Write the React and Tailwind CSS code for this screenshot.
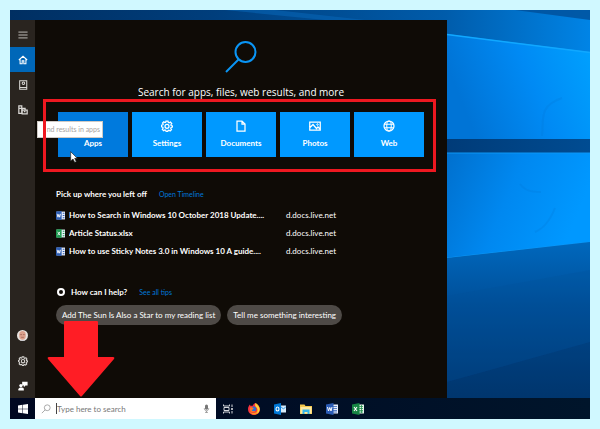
function Icon({ className = 'size-3', children }) {
  return (
    <svg viewBox="0 0 24 24" className={className} fill="none" stroke="currentColor" strokeWidth="2" aria-hidden="true">
      {children}
    </svg>
  )
}

function Gear({ className }) {
  return (
    <Icon className={className}>
      <path strokeWidth="2.500" d="M10 2h4l.7 3 1.600.7L19 4l2.500 3-1.700 2.500.4 1.600 2.800.7v2.400l-2.800.8-.7 1.600 1.500 2.600-2.700 2.600-2.600-1.500-1.700.7L13.500 23h-3.200l-.8-2.500-1.600-.7-2.600 1.500-2.600-2.600 1.500-2.600-.7-1.700-2.600-.8v-3.200l2.800-.8.7-1.600L3 6l2.500-2.500L8 5l1.400-.6z" />
      <circle cx="12" cy="12.500" r="4" strokeWidth="2.500" />
    </Icon>
  )
}

const TILES = [
  { name: 'Apps', icon: null },
  { name: 'Settings', icon: <Gear className="size-3" /> },
  {
    name: 'Documents',
    icon: (
      <Icon>
        <path strokeWidth="2.500" d="M4 2h10l6 6v14H4z M14 2v6h6" />
      </Icon>
    ),
  },
  {
    name: 'Photos',
    icon: (
      <Icon>
        <path strokeWidth="2.500" d="M1.500 4h21v16h-21z M2 15l6-6 7 8 3-3 4 4" />
        <circle cx="17" cy="9" r="1.500" />
      </Icon>
    ),
  },
  {
    name: 'Web',
    icon: (
      <Icon>
        <circle cx="12" cy="12" r="10" strokeWidth="2.500" />
        <ellipse cx="12" cy="12" rx="4.500" ry="10" />
        <path d="M3 8.500h18M3 15.500h18" />
      </Icon>
    ),
  },
]

const WORD = { color: '#2f5fb3', mark: 'M2 5l1.500 6L5 6l1.500 5L8 5' }
const EXCEL = { color: '#1f9a50', mark: 'M3 5l4 6M7 5l-4 6' }

const FILES = [
  { name: 'How to Search in Windows 10 October 2018 Update....', host: 'd.docs.live.net', type: WORD },
  { name: 'Article Status.xlsx', host: 'd.docs.live.net', type: EXCEL },
  { name: 'How to use Sticky Notes 3.0 in Windows 10 A guide....', host: 'd.docs.live.net', type: WORD },
]

const TIPS = ['Add The Sun Is Also a Star to my reading list', 'Tell me something interesting']

function Wallpaper() {
  return (
    <svg
      viewBox="0 0 580 409"
      preserveAspectRatio="none"
      className="absolute inset-0 size-full"
      aria-hidden="true"
    >
      <defs>
        <linearGradient id="sky" x1="0" x2="1" y1="0" y2="0">
          <stop offset="0" stopColor="#002f62" />
          <stop offset="0.35" stopColor="#003e7c" />
          <stop offset="0.75" stopColor="#005cab" />
          <stop offset="1" stopColor="#0084e6" />
        </linearGradient>
        <linearGradient id="pane" x1="0" x2="1" y1="0.3" y2="0">
          <stop offset="0" stopColor="#0074d6" />
          <stop offset="0.5" stopColor="#008af4" />
          <stop offset="1" stopColor="#00a2ff" />
        </linearGradient>
        <linearGradient id="paneLow" x1="0" x2="1" y1="0" y2="0.3">
          <stop offset="0" stopColor="#0070ce" />
          <stop offset="0.5" stopColor="#0088f0" />
          <stop offset="1" stopColor="#0098ff" />
        </linearGradient>
        <linearGradient id="floor" x1="0" x2="0" y1="0" y2="1">
          <stop offset="0" stopColor="#0068bd" />
          <stop offset="0.35" stopColor="#004f99" />
          <stop offset="0.8" stopColor="#003a76" />
          <stop offset="1" stopColor="#003469" />
        </linearGradient>
        <linearGradient id="bar" x1="0" x2="1" y1="0" y2="0">
          <stop offset="0" stopColor="#003b78" />
          <stop offset="1" stopColor="#004c92" />
        </linearGradient>
      </defs>
      <path fill="url(#sky)" d="M0 0h580v409H0z" />
      <path fill="#0764b4" opacity="0.6" d="M215 0h50l90 10h-40z" />
      <path fill="#004f99" opacity="0.8" d="M505 0h75v10z" />
      <path fill="url(#pane)" d="M437 24l143 18v88H437z" />
      <path stroke="#10a8ff" strokeWidth="1.500" d="M437 24.500l143 18" />
      <path fill="url(#bar)" d="M437 129h143v14H437z" />
      <path fill="url(#paneLow)" d="M437 143h143v89l-143 16z" />
      <path stroke="#0c97f5" d="M437 143h143M437 248l143-16" />
      <path fill="url(#floor)" d="M437 248l143-16v177H437z" />
      <path fill="#003166" opacity="0.2" d="M437 372l143-40v77H437z" />
      <path fill="#004f97" opacity="0.2" d="M437 286l143-26v72l-143 40z" />
      <path fill="none" stroke="#0079d8" strokeWidth="2" opacity="0.25" d="M532 126c2-16-4-30 20-38M510 174c5 7 12 8 21 8M525 222c10-4 16-14 20-24" />
    </svg>
  )
}

function Sidebar() {
  return (
    <nav className="flex w-[25px] shrink-0 flex-col bg-[#29241f] pt-[2px] text-[#d8d6d3]">
      <button aria-label="Menu" className="flex h-[25px] items-center justify-center">
        <Icon className="size-[10px]">
          <path d="M1 5h22M1 12h22M1 19h22" strokeWidth="2" />
        </Icon>
      </button>
      <button aria-label="Home" className="flex h-[25px] items-center justify-center bg-[#0067b8] text-white">
        <Icon className="size-[10px]">
          <path d="M2 12L12 3l10 9M5 10v11h5v-7h4v7h5V10" strokeWidth="2.500" />
        </Icon>
      </button>
      <button aria-label="Notebook" className="flex h-[25px] items-center justify-center">
        <Icon className="size-[10px]">
          <path d="M4 2h17v16H4zM4 18v4h17v-4" strokeWidth="2.500" />
          <circle cx="13" cy="8" r="3" strokeWidth="2.500" />
        </Icon>
      </button>
      <button aria-label="Devices" className="flex h-[25px] items-center justify-center">
        <Icon className="size-[10px]">
          <path d="M2 20V2h7v18zM2 8h7M10 11V8h7v3M10 12h12v9H10zM14 16h4" strokeWidth="3" />
        </Icon>
      </button>
      <button aria-label="Account" className="mt-auto flex h-[25px] items-center justify-center">
        <svg viewBox="0 0 24 24" className="size-[11px]" aria-hidden="true">
          <circle cx="12" cy="12" r="12" fill="#e8e3df" />
          <path fill="#dba08c" d="M5 9c0-9 14-9 14 0v6c-1 8-13 8-14 0z" />
          <path stroke="#9a5f52" strokeWidth="1.500" d="M7 10h4M13 10h4M9 16h6" />
          <path fill="#c5c8cf" d="M5 20c4 3 10 3 14 0-3 5-11 5-14 0z" />
        </svg>
      </button>
      <button aria-label="Settings" className="flex h-[25px] items-center justify-center">
        <Gear className="size-[10px]" />
      </button>
      <button aria-label="Feedback" className="flex h-[25px] items-center justify-center text-white">
        <svg viewBox="0 0 24 24" className="size-[10px]" fill="currentColor" aria-hidden="true">
          <path d="M10 2h13v9h-5l-4 4v-4h-4z" />
          <circle cx="7" cy="11" r="4" />
          <path d="M1 23v-3c0-6 13-6 13-1v4z" />
        </svg>
      </button>
    </nav>
  )
}

function SearchTiles() {
  return (
    <div className="relative mr-[11px] ml-2 border-3 border-[#ee1820] pt-[10px] pr-[9px] pb-3 pl-3">
      <div className="grid grid-cols-5 gap-1">
        {TILES.map((tile, i) => (
          <button
            key={tile.name}
            className={`flex h-[45px] flex-col items-center pt-2 text-[8px] leading-3 font-bold text-white ${
              i === 0 ? 'bg-[#007add]' : 'bg-[#0099ff]'
            }`}
          >
            <span className="mb-[5px] flex h-3 items-center">{tile.icon}</span>
            {tile.name}
          </button>
        ))}
      </div>
      {/* hover tooltip and pointer */}
      <div className="absolute top-[19px] -left-[9px] flex h-[17px] w-[66px] items-center justify-end border border-[#cfcac5] bg-white pr-[2px] text-[7px] leading-none whitespace-nowrap text-[#a8a49f]">
        nd results in apps
        <span className="absolute -inset-y-px left-[5px] w-[3px] bg-[#ee1820]" />
      </div>
      <svg viewBox="0 0 12 18" className="absolute top-[49px] left-[24px] h-3 w-2" aria-hidden="true">
        <path fill="#fff" stroke="#222" d="M1 1v14l3.500-3 2.500 5 2.500-1-2.500-5H11z" />
      </svg>
    </div>
  )
}

function SearchPanel() {
  return (
    <main className="flex min-w-0 flex-1 flex-col bg-[#0f0b06] text-white">
      <svg viewBox="0 0 32 32" className="mx-auto mt-[21px] size-8 shrink-0" fill="none" stroke="#0a95f5" strokeWidth="2" aria-hidden="true">
        <circle cx="20.500" cy="11" r="10" />
        <path d="M13.500 18.500L1 31" />
      </svg>
      <h1 className="mt-3 text-center font-['Open_Sans','Noto_Sans',sans-serif] text-[10px] leading-[14px] font-medium">
        Search for apps, files, web results, and more
      </h1>
      <SearchTiles />

      <section className="mt-[14px] px-[21px]">
        <div className="flex items-center gap-3 leading-4">
          <h2 className="text-[8px] font-bold">Pick up where you left off</h2>
          <a href="#timeline" className="text-[7px] text-[#0078d7]">Open Timeline</a>
        </div>
        <ul className="mt-1">
          {FILES.map((file) => (
            <li key={file.name} className="flex h-[18px] items-center text-[8px]">
              <svg viewBox="0 0 16 16" className="mr-1 size-[9px] shrink-0" aria-hidden="true">
                <path fill="#e9eefa" d="M1 1h15v14H1z" />
                <path fill={file.type.color} d="M0 1l10-1v16L0 15zM12 3h3v2h-3zM12 7h3v2h-3zM12 11h3v2h-3z" />
                <path fill="none" stroke="#fff" strokeWidth="1.500" d={file.type.mark} />
              </svg>
              <span className="w-[217px] truncate font-bold">{file.name}</span>
              <span>{file.host}</span>
            </li>
          ))}
        </ul>
      </section>

      <section className="mt-6 px-[21px]">
        <div className="flex items-center gap-3 leading-4">
          <h2 className="flex items-center gap-[6px] text-[8px] font-bold">
            <span className="ml-px size-2 rounded-full border-2 border-white" />
            How can I help?
          </h2>
          <a href="#tips" className="text-[7px] text-[#0078d7]">See all tips</a>
        </div>
        <div className="mt-[5px] flex flex-wrap gap-[6px]">
          {TIPS.map((tip) => (
            <button key={tip} className="h-5 rounded-full bg-[#4e4a46] px-[6px] text-[8px] leading-5 whitespace-nowrap">
              {tip}
            </button>
          ))}
        </div>
      </section>
    </main>
  )
}

function Taskbar() {
  return (
    <footer className="relative flex h-[21px] shrink-0 bg-linear-to-r from-[#000720] to-[#00152b]">
      <button aria-label="Start" className="flex w-[25px] items-center justify-center">
        <svg viewBox="0 0 20 20" className="size-[10px]" fill="#fff" aria-hidden="true">
          <path d="M0 3l9-1.300V9.500H0zM10 1.500L20 0v9.500H10zM0 10.500h9v7.800L0 17zM10 10.500h10V20l-10-1.500z" />
        </svg>
      </button>
      <label className="flex w-[181px] items-center bg-white px-[6px] text-[#9a9a9a]">
        <Icon className="mr-[5px] size-[10px] shrink-0">
          <circle cx="15" cy="9" r="7" />
          <path d="M10 14l-8 8" />
        </Icon>
        <input
          aria-label="Search"
          placeholder="Type here to search"
          className="h-[11px] min-w-0 flex-1 border-l border-[#444] text-[8px] outline-none placeholder:text-[#777]"
        />
        <svg viewBox="0 0 16 24" className="h-[9px] w-[7px]" aria-hidden="true">
          <rect x="4" y="1" width="8" height="14" rx="4" fill="#777" />
          <path fill="none" stroke="#888" strokeWidth="2" d="M2 11c0 10 12 10 12 0M8 18v5M4 23h8" />
        </svg>
      </label>
      <div className="flex items-center gap-[14px] pl-[6px]">
        <button aria-label="Task View">
          <Icon className="size-3 text-[#d5d8dd]">
            <path d="M3 3v3h12V3M3 21v-3h12v3M4 9h10v6H4zM20 3v5M20 16v5" />
            <path d="M19 11h2v2h-2z" fill="currentColor" />
          </Icon>
        </button>
        <button aria-label="Firefox">
          <svg viewBox="0 0 24 24" className="size-3" aria-hidden="true">
            <path fill="#f5333f" d="M12 24C5 24 0 19 0 12c0-4 2-7 4-9l1 3c2-1 3-1 4 0 1-3 3-5 6-6 1 3 9 5 9 13 0 6-5 11-12 11z" />
            <path fill="#ff9a1c" d="M3 15c3 7 14 7 16-1 1-5-2-8-4-14 6 3 9 8 8 14-1 5-5 9-11 9-4 0-8-3-9-8z" />
            <path fill="#ffd43a" d="M15 0c3 5 8 6 8 13 0 4-2 7-5 8 3-6 1-10-2-13-2-2-2-5-1-8z" />
            <circle cx="11.500" cy="12" r="5" fill="#2b6fd8" />
            <path fill="#ff7b20" d="M4 9c3-1 5 0 8 2-2 0-2 3-5 3 2 3 6 3 8 1-1 5-10 5-11-1z" />
          </svg>
        </button>
        <button aria-label="Outlook">
          <svg viewBox="0 0 24 24" className="size-3" aria-hidden="true">
            <path fill="#d9ecfa" d="M13 5h11v14H13z" />
            <path fill="none" stroke="#0078d7" strokeWidth="1.500" d="M13 7l6 5 5-5" />
            <path fill="#0078d7" d="M0 3l14-3v24L0 21z" />
            <ellipse cx="7" cy="12" rx="3" ry="4" fill="none" stroke="#fff" strokeWidth="2.200" />
          </svg>
        </button>
        <button aria-label="File Explorer">
          <svg viewBox="0 0 24 24" className="size-3" aria-hidden="true">
            <path fill="#f5c84c" d="M0 3h9l2 3h13v16H0z" />
            <path fill="#ffeaa0" d="M1 8h22v13H1z" />
            <path fill="#36b5e8" d="M5 13h14v9h-4v-4H9v4H5z" />
          </svg>
        </button>
        <button aria-label="Word">
          <svg viewBox="0 0 24 24" className="size-3" aria-hidden="true">
            <path fill="#e8eefb" d="M13 3h11v18H13z" />
            <path stroke="#2f5fb3" strokeWidth="1.500" d="M14 7h8M14 11h8M14 15h8M14 18h8" />
            <path fill="#2b5cb5" d="M0 3l15-3v24L0 21z" />
            <path fill="none" stroke="#fff" strokeWidth="2" d="M3 8l2 8 2.500-7L10 16l2-8" />
          </svg>
        </button>
        <button aria-label="Excel">
          <svg viewBox="0 0 24 24" className="size-3" aria-hidden="true">
            <path fill="#e6f5ea" d="M13 3h11v18H13z" />
            <path stroke="#1c8f48" strokeWidth="1.500" d="M14 7h8M14 11h8M14 15h8M14 18h8M19 4v16" />
            <path fill="#178544" d="M0 3l15-3v24L0 21z" />
            <path stroke="#fff" strokeWidth="2.200" d="M4 8l6 8M10 8l-6 8" />
          </svg>
        </button>
      </div>
    </footer>
  )
}

export default function App() {
  return (
    <div className="flex min-h-screen flex-col bg-[#d0f8ff] p-[10px] font-['Lato','Open_Sans',sans-serif]">
      <div className="relative flex flex-1 flex-col">
        <Wallpaper />
        <div className="relative mt-[10px] mr-[143px] flex flex-1">
          <Sidebar />
          <SearchPanel />
          {/* callout arrow pointing at the search box */}
          <svg viewBox="0 0 68 76" className="absolute bottom-[1px] left-[37px] h-[76px] w-[68px]" aria-hidden="true">
            <path fill="#ff1d25" d="M17 1q0-1 1-1h32q1 0 1 1v35h15q2 0 1 2L35 75q-1 1-2 0L1 38q-1-2 1-2h15z" />
          </svg>
        </div>
        <Taskbar />
      </div>
    </div>
  )
}
